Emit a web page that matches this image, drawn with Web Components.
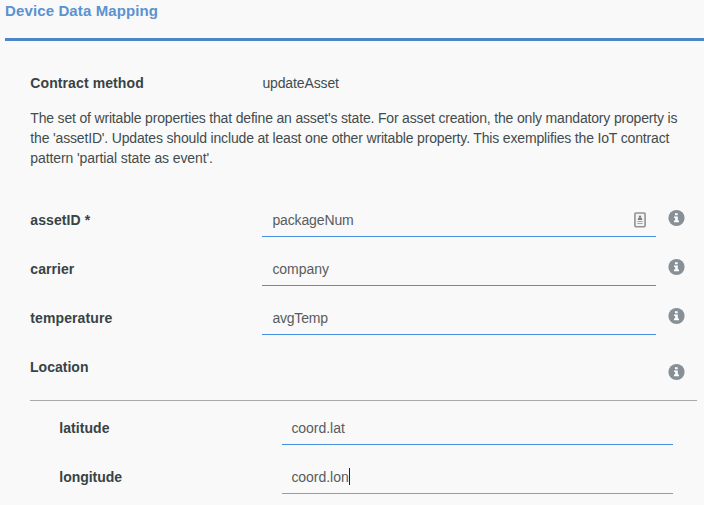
<!DOCTYPE html>
<html lang="en">
<head>
<meta charset="utf-8">
<title>Device Data Mapping</title>
<style>
body { margin: 0; background: #f9f9f9; font: 14px/20px "Liberation Sans", Arial, sans-serif; color: #374345; overflow: hidden; }
</style>
</head>
<body>
<mapping-panel heading="Device Data Mapping">
  <mapping-row label="Contract method" static style="--ls:.1px;--vls:-.13px">updateAsset</mapping-row>
  <mapping-note>
    <mapping-line style="letter-spacing:-.175px">The set of writable properties that define an asset's state. For asset creation, the only mandatory property is</mapping-line>
    <mapping-line style="letter-spacing:-.163px">the 'assetID'. Updates should include at least one other writable property. This exemplifies the IoT contract</mapping-line>
    <mapping-line style="letter-spacing:-.1px">pattern 'partial state as event'.</mapping-line>
  </mapping-note>
  <mapping-row label="assetID *" info style="--ls:.08px;--vls:-.13px">packageNum<contact-icon slot="end"></contact-icon></mapping-row>
  <mapping-row label="carrier" info style="--vls:-.05px;--ls:.05px">company</mapping-row>
  <mapping-row label="temperature" info style="--ls:.1px;--vls:-.2px">avgTemp</mapping-row>
  <mapping-group label="Location">
    <mapping-row label="latitude" nested style="--ls:.05px;--vls:-.03px">coord.lat</mapping-row>
    <mapping-row label="longitude" nested style="--ls:-.04px;--vls:-.03px;--line:#64aae4">coord.lon<text-caret></text-caret></mapping-row>
  </mapping-group>
</mapping-panel>
<script>
class Base extends HTMLElement {
  connectedCallback() {
    if (!this.shadowRoot) this.attachShadow({ mode: 'open' }).innerHTML = this.render();
  }
}
customElements.define('mapping-panel', class extends Base {
  render() {
    return `<style>
      :host { display: block; }
      header { height: 38px; margin-left: 5px; border-bottom: 3px solid #4a86c8; font-size: 15px; font-weight: bold; line-height: 22px; letter-spacing: .12px; color: #5b92d0; }
      main { padding: 32px 7px 0 30px; }
    </style>
    <header>${this.getAttribute('heading')}</header><main><slot></slot></main>`;
  }
});
customElements.define('mapping-note', class extends Base {
  render() {
    return `<style>:host { display: block; height: 101px; margin-top: -14px; padding-left: .3px; color: #424c4e; white-space: nowrap; }</style><slot></slot>`;
  }
});
customElements.define('mapping-line', class extends Base {
  render() { return `<style>:host { display: block; }</style><slot></slot>`; }
});
customElements.define('info-icon', class extends Base {
  render() {
    return `<style>:host { display: block; width: 17px; height: 18px; } svg { display: block; }</style>
    <svg width="17" height="18" viewBox="0 -.5 17 18"><circle cx="8.5" cy="8.5" r="8.1" fill="#879096"/>
    <path fill="#fff" d="M7 3.8h2.7v2H7zM6 6.9h3.8v4.2H11v1.7H6v-1.7h1.2V8.5H6z"/></svg>`;
  }
});
customElements.define('contact-icon', class extends Base {
  render() {
    return `<style>:host { display: block; width: 12px; height: 16px; margin: 1px 10px 0 0; } svg { display: block; }</style>
    <svg width="12" height="16" viewBox="0 0 12 16"><rect x=".9" y="1" width="10.2" height="13.8" rx="1" fill="#f4f4f4" stroke="#929292" stroke-width="1.6"/>
    <circle cx="6" cy="4.6" r="1.2" fill="#7c7c7c"/><path fill="#7c7c7c" d="M3.8 8V6.9Q4.2 5.6 6 5.6T8.2 6.9V8z"/>
    <path stroke="#a4a4a4" d="M3.4 9.5h5.2M3.4 11.5h5.2"/></svg>`;
  }
});
customElements.define('text-caret', class extends Base {
  render() { return `<style>:host { display: block; width: 1px; height: 17px; background: #222; }</style>`; }
});
customElements.define('mapping-row', class extends Base {
  render() {
    return `<style>
      :host { display: grid; grid-template-columns: 232px 394px 1fr; height: 49px; }
      :host([nested]) { grid-template-columns: 223px 391px 1fr; }
      .label { font-weight: bold; letter-spacing: var(--ls, 0); padding: 1px 0 0 .3px; }
      .value { display: flex; align-items: center; box-sizing: border-box; height: 28px; padding: 0 0 6px 10.4px; letter-spacing: var(--vls, 0); color: #585c5e; border-bottom: 1px solid var(--line, #4a90e2); }
      :host([nested]) .value { padding-left: 9.4px; }
      :host([static]) .label { padding-top: 0; }
      :host([static]) .value { padding: 0 0 0 .4px; height: 20px; border: 0; color: #424c4e; }
      .end { margin-left: auto; }
      info-icon { margin: 0 0 0 12px; }
    </style>
    <span class="label">${this.getAttribute('label')}</span>
    <span class="value"><slot></slot><span class="end"><slot name="end"></slot></span></span>
    ${this.hasAttribute('info') ? '<info-icon></info-icon>' : ''}`;
  }
});
customElements.define('mapping-group', class extends Base {
  render() {
    return `<style>
      :host { display: block; }
      .head { display: flex; justify-content: space-between; box-sizing: border-box; height: 45px; border-bottom: 1px solid #aaa; }
      .title { padding-top: 1px; font-weight: bold; letter-spacing: .02px; }
      info-icon { margin: 7px 12px 0 0; }
      .body { padding: 16px 0 0 29px; }
    </style>
    <div class="head"><span class="title">${this.getAttribute('label')}</span><info-icon></info-icon></div>
    <div class="body"><slot></slot></div>`;
  }
});
</script>
</body>
</html>
